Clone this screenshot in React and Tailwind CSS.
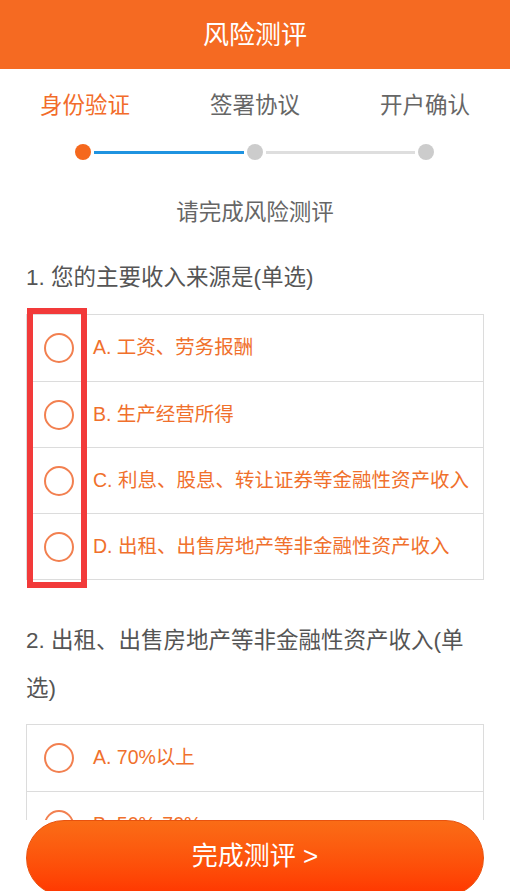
import React from "react";

const cjk = { fontFamily: '"Liberation Sans", "Noto Sans CJK SC", "Noto Sans", sans-serif' };

const steps = ["身份验证", "签署协议", "开户确认"];

const q1 = [
  "A. 工资、劳务报酬",
  "B. 生产经营所得",
  "C. 利息、股息、转让证券等金融性资产收入",
  "D. 出租、出售房地产等非金融性资产收入",
];

const q2 = ["A. 70%以上", "B. 50%-70%", "C. 30%-50%", "D. 30%以下"];

const Option = ({ label, first }) => (
  <div
    className={`flex h-[66px] items-center pl-[17px] ${first ? "" : "border-t border-[#dcdcdc]"}`}
  >
    <span className="h-[30px] w-[30px] shrink-0 rounded-full border-2 border-[#f28050]" />
    <span className="ml-[19px] text-[19.5px] leading-none text-[#f0702c]">{label}</span>
  </div>
);

const App = () => {
  return (
    <div className="flex h-[891px] w-[510px] flex-col overflow-hidden bg-white" style={cjk}>
      <header className="flex h-[69px] shrink-0 items-center justify-center bg-[#f56a22]">
        <h1 className="text-[26px] leading-none text-white">风险测评</h1>
      </header>

      <main className="flex-1 overflow-hidden">
        <div className="mt-[22px] grid grid-cols-3">
          {steps.map((s, i) => (
            <div
              key={s}
              className={`text-center text-[22.5px] leading-[30px] ${i === 0 ? "text-[#f26c2a]" : "text-[#666666]"}`}
            >
              {s}
            </div>
          ))}
        </div>

        <div className="mt-[23px] flex items-center pl-[75px] pr-[76px]">
          <span className="h-4 w-4 shrink-0 rounded-full bg-[#f5681d]" />
          <span className="mx-[3px] h-[3px] flex-1 bg-[#1f93e0]" />
          <span className="h-4 w-4 shrink-0 rounded-full bg-[#cccccc]" />
          <span className="mx-[3px] h-[3px] flex-1 bg-[#dedede]" />
          <span className="h-4 w-4 shrink-0 rounded-full bg-[#cccccc]" />
        </div>

        <p className="mt-[38px] text-center text-[22.5px] leading-[30px] text-[#666666]">请完成风险测评</p>

        <div className="px-[26px]">
          <p className="mt-[35px] text-[22.5px] leading-[30px] text-[#555555]">1. 您的主要收入来源是(单选)</p>

          <div className="relative mt-[21px]">
            <div className="border border-[#dcdcdc]">
              {q1.map((o, i) => (
                <Option key={o} label={o} first={i === 0} />
              ))}
            </div>
            <div className="pointer-events-none absolute -top-[6px] left-[1px] h-[280px] w-[60px] border-[6px] border-[#f23a3a]" />
          </div>

          <p className="mt-[37px] text-[22.5px] leading-[48px] text-[#555555]">
            2. 出租、出售房地产等非金融性资产收入(单选)
          </p>

          <div className="mt-[11px] border border-[#dcdcdc]">
            {q2.map((o, i) => (
              <Option key={o} label={o} first={i === 0} />
            ))}
          </div>
        </div>
      </main>

      <footer className="h-[71px] shrink-0 bg-white px-[26px]">
        <button className="flex h-[76px] w-full items-center justify-center rounded-full border border-[#e8520f] bg-gradient-to-b from-[#fa6c16] to-[#ff3500] pb-[4px] text-[26px] leading-none text-white">
          完成测评 &gt;
        </button>
      </footer>
    </div>
  );
};

export default App;
